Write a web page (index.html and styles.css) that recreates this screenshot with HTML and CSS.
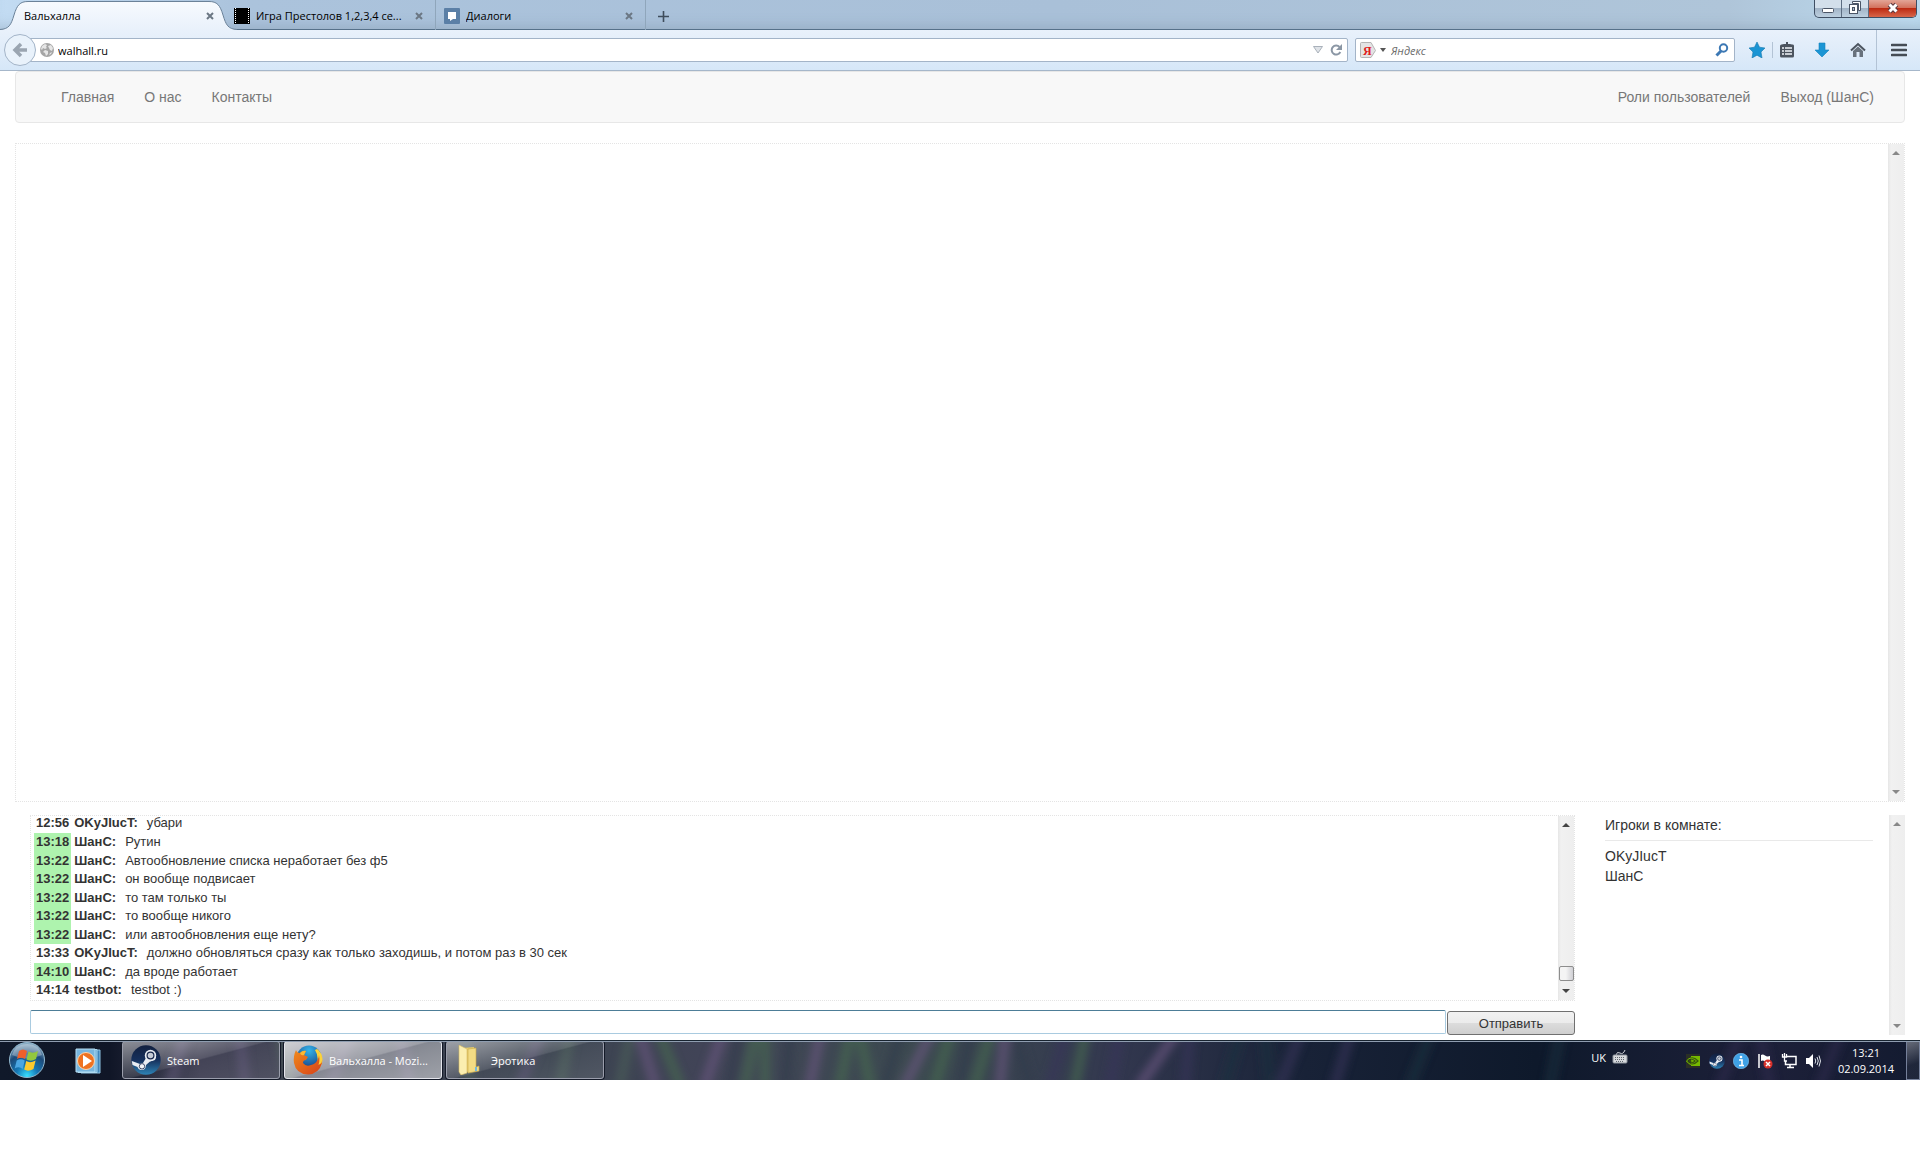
FILE: index.html
```html
<!DOCTYPE html>
<html lang="ru">
<head>
    <meta charset="UTF-8">
    <meta name="viewport" content="width=device-width, initial-scale=1.0">
    <title>Вальхалла</title>
    <link rel="stylesheet" href="styles.css">
</head>
<body>
    <!-- Вкладки -->
    <header class="tabstrip">
        <div class="tab tab-active">
            <svg class="tab-shape" viewBox="0 0 237 30" width="237" height="30">
                <defs>
                    <linearGradient id="tabFill" x1="0" y1="0" x2="0" y2="1">
                        <stop offset="0" stop-color="#f7fafe"/>
                        <stop offset="1" stop-color="#e9f1fb"/>
                    </linearGradient>
                </defs>
                <path d="M0 30V29.500C9 29 11 25 14 15C17 5 20 1.500 28 1.500H209C217 1.500 220 5 223 15C226 25 228 29 237 29.500V30Z" fill="url(#tabFill)"/>
                <path d="M0 29.500C9 29 11 25 14 15C17 5 20 1.500 28 1.500H209C217 1.500 220 5 223 15C226 25 228 29 237 29.500" fill="none" stroke="#6b8299"/>
            </svg>
            <span class="tab-title">Вальхалла</span>
            <button class="tab-close" aria-label="Закрыть"><svg viewBox="0 0 8 8" width="8" height="8"><path d="M1 1l6 6M7 1l-6 6"/></svg></button>
        </div>
        <div class="tab tab-film">
            <svg viewBox="0 0 16 16" width="16" height="16">
                <rect width="16" height="16" fill="#000"/>
                <path d="M1.500 0V16M14.500 0V16" stroke="#fff" stroke-dasharray="1 1"/>
            </svg>
            <span class="tab-title">Игра Престолов 1,2,3,4 се...</span>
            <button class="tab-close" aria-label="Закрыть"><svg viewBox="0 0 8 8" width="8" height="8"><path d="M1 1l6 6M7 1l-6 6"/></svg></button>
        </div>
        <div class="tab tab-vk">
            <svg viewBox="0 0 16 16" width="16" height="16">
                <rect width="16" height="16" rx="1" fill="#5b7fa6"/>
                <path d="M4 4H12V11H9L6 13V11H4Z" fill="#fff"/>
            </svg>
            <span class="tab-title">Диалоги</span>
            <button class="tab-close" aria-label="Закрыть"><svg viewBox="0 0 8 8" width="8" height="8"><path d="M1 1l6 6M7 1l-6 6"/></svg></button>
        </div>
        <button class="tab-new" aria-label="Новая вкладка"><svg viewBox="0 0 11 11" width="11" height="11"><path d="M5.500 0V11M0 5.500H11" stroke="#3f4d5c" stroke-width="1.600"/></svg></button>
        <div class="window-buttons">
            <button class="win-min" aria-label="Свернуть"><svg viewBox="0 0 14 12" width="14" height="12"><rect x="1.500" y="6.500" width="11" height="4" rx="1" fill="#fff" stroke="#4b5566"/></svg></button>
            <button class="win-max" aria-label="Развернуть"><svg viewBox="0 0 14 13" width="14" height="13"><path d="M4.500 .5H12.500V9.500H10.500V2.500H4.500Z" fill="#fff" stroke="#4b5566"/><rect x="1.500" y="3.500" width="8" height="9" fill="#fff" stroke="#4b5566"/><rect x="4.500" y="6.500" width="2" height="3" fill="#a9b9cc" stroke="#4b5566"/></svg></button>
            <button class="win-close" aria-label="Закрыть окно"><svg viewBox="0 0 14 12" width="14" height="12"><path d="M3.500 2.500L10.500 9.500M10.500 2.500L3.500 9.500" stroke="#5a3a40" stroke-width="5"/><path d="M3.500 2.500L10.500 9.500M10.500 2.500L3.500 9.500" stroke="#fff" stroke-width="3"/></svg></button>
        </div>
    </header>

    <!-- Панель навигации браузера -->
    <div class="toolbar">
        <div class="address">
            <button class="back" aria-label="Назад"><svg viewBox="0 0 16 16" width="16" height="16"><path d="M9 2L3 8L9 14M3.500 8H15" fill="none" stroke="#9aa5b1" stroke-width="3.500"/></svg></button>
            <svg class="globe" viewBox="0 0 14 14" width="14" height="14">
                <circle cx="7" cy="7" r="7" fill="#a5a5a5"/>
                <path d="M2 3L5 1L7 2L6 4L7 5L5 6L3 5L2 7L1 6ZM8 3L11 2L13 5L12 8L10 7L9 5ZM5 7L8 8L8 11L6 13L5 10L3 9ZM10 10L12 9L11 11L9 12Z" fill="#e6e6e6"/>
            </svg>
            <input class="url" type="text" value="walhall.ru" aria-label="Адрес">
            <svg class="url-drop" viewBox="0 0 10 8" width="10" height="8"><path d="M.5 .5H9.500L5 7Z" fill="#dfe3e8" stroke="#a9b1ba"/></svg>
            <button class="reload" aria-label="Обновить"><svg viewBox="0 0 12 12" width="12" height="12"><path d="M9.500 3A4.500 4.500 0 1 0 10.300 8" fill="none" stroke="#8b97a5" stroke-width="2"/><path d="M12 0V6H6Z" fill="#8b97a5"/></svg></button>
        </div>
        <div class="search">
            <svg viewBox="0 0 16 17" width="16" height="17">
                <path d="M1.500 .5H11L15.500 8.500L11 15.500H1.500Q.5 15.500 .5 14.500V1.500Q.5 .5 1.500 .5Z" fill="#e4e4e4" stroke="#b4b4b4"/>
                <text class="ya" x="3" y="13">Я</text>
            </svg>
            <svg class="search-drop" viewBox="0 0 6 4" width="6" height="4"><path d="M0 0H6L3 4Z" fill="#555"/></svg>
            <input class="search-input" type="text" placeholder="Яндекс" aria-label="Поиск">
            <button aria-label="Найти"><svg viewBox="0 0 14 14" width="14" height="14"><circle cx="8.500" cy="5" r="3.700" fill="none" stroke="#3c78b4" stroke-width="2"/><path d="M6 8L1.500 12.500" stroke="#3c78b4" stroke-width="3"/></svg></button>
        </div>
        <div class="tools">
            <button aria-label="В закладки"><svg viewBox="0 0 16 16" width="16" height="16"><path d="M8 0L10.500 5.200L16 6L12 10L13 16L8 13.200L3 16L4 10L0 6L5.500 5.200Z" fill="#1b95d4"/><path d="M8 0L10.500 5.200L16 6L12 10L13 16L8 13.200L3 16L4 10L0 6L5.500 5.200Z" fill="none" stroke="#1477ad" stroke-width=".6"/></svg></button>
            <button class="bookmarks" aria-label="Закладки"><svg viewBox="0 0 16 16" width="16" height="16"><path d="M5 2L7 2V0H9V2H11L13 2.500H14Q15 2.500 15 4V14Q15 15.500 13.500 15.500H2.500Q1 15.500 1 14V4Q1 2.500 2.500 2.500Z" fill="#4c545f"/><path d="M3 6H5M6 6H13M3 9H5M6 9H13M3 12H5M6 12H13" stroke="#f1f5fa" stroke-width="1.600"/></svg></button>
            <button aria-label="Загрузки"><svg viewBox="0 0 16 16" width="16" height="16"><path d="M5 1H11V8H15L8 15L1 8H5Z" fill="#1b95d4" stroke="#1684bd" stroke-width=".6"/></svg></button>
            <button aria-label="Домой"><svg viewBox="0 0 16 16" width="16" height="16"><path d="M1 8.500L8 2L15 8.500" fill="none" stroke="#4c545f" stroke-width="2"/><path d="M3 9L8 4.500L13 9V15H9.500V10H6.500V15H3Z" fill="#68717c"/></svg></button>
            <button class="menu" aria-label="Меню"><svg viewBox="0 0 16 14" width="16" height="14"><path d="M1 2H15M1 7H15M1 12H15" stroke="#454c55" stroke-width="2.600" stroke-linecap="round"/></svg></button>
        </div>
    </div>

    <!-- Страница -->
    <main class="page">
        <nav class="navbar">
            <ul>
                <li><a href="#">Главная</a></li>
                <li><a href="#">О нас</a></li>
                <li><a href="#">Контакты</a></li>
            </ul>
            <ul>
                <li><a href="#">Роли пользователей</a></li>
                <li><a href="#">Выход (ШанС)</a></li>
            </ul>
        </nav>

        <section class="game">
            <div class="scrollbar scrollbar-off"><i class="up"></i><i class="down"></i></div>
        </section>

        <div class="room">
            <section class="chat">
                <div class="chat-box">
                    <ul class="messages">
                        <li><b class="time">12:56</b><b>OKyJIucT:</b><span>убари</span></li>
                        <li><b class="time mine">13:18</b><b>ШанС:</b><span>Рутин</span></li>
                        <li><b class="time mine">13:22</b><b>ШанС:</b><span>Автообновление списка неработает без ф5</span></li>
                        <li><b class="time mine">13:22</b><b>ШанС:</b><span>он вообще подвисает</span></li>
                        <li><b class="time mine">13:22</b><b>ШанС:</b><span>то там только ты</span></li>
                        <li><b class="time mine">13:22</b><b>ШанС:</b><span>то вообще никого</span></li>
                        <li><b class="time mine">13:22</b><b>ШанС:</b><span>или автообновления еще нету?</span></li>
                        <li><b class="time">13:33</b><b>OKyJIucT:</b><span>должно обновляться сразу как только заходишь, и потом раз в 30 сек</span></li>
                        <li><b class="time mine">14:10</b><b>ШанС:</b><span>да вроде работает</span></li>
                        <li><b class="time">14:14</b><b>testbot:</b><span>testbot :)</span></li>
                    </ul>
                    <div class="scrollbar"><i class="up"></i><i class="thumb"></i><i class="down"></i></div>
                </div>
                <form class="send">
                    <input type="text" aria-label="Сообщение">
                    <button type="button">Отправить</button>
                </form>
            </section>
            <aside class="players">
                <div class="players-list">
                    <h2>Игроки в комнате:</h2>
                    <ul>
                        <li>OKyJIucT</li>
                        <li>ШанС</li>
                    </ul>
                </div>
                <div class="scrollbar scrollbar-off"><i class="up"></i><i class="down"></i></div>
            </aside>
        </div>
    </main>

    <!-- Панель задач -->
    <footer class="taskbar">
        <svg class="grass" viewBox="0 0 1920 40" preserveAspectRatio="none">
            <defs>
                <filter id="soft" x="-5%" y="-50%" width="110%" height="200%"><feGaussianBlur stdDeviation="4 3"/></filter>
            </defs>
            <g filter="url(#soft)" fill="none" stroke-width="11" opacity=".6">
                <path d="M170 45L185 -5M245 45L240 -5M330 45L350 -5M410 45L400 -5M520 45L540 -5" stroke="#57506f"/>
                <path d="M290 45L280 -5M470 45L465 -5M560 45L570 -5M620 45L630 -5" stroke="#4b5f58"/>
                <path d="M655 45L640 -5M705 45L722 -5M810 45L820 -5M905 45L930 -5M1000 45L1005 -5M1140 45L1175 -5" stroke="#6b5680"/>
                <path d="M680 45L660 -5M745 45L755 -5M765 45L765 -5M840 45L850 -5M870 45L860 -5M935 45L950 -5M975 45L990 -5M1075 45L1085 -5" stroke="#466a50"/>
                <path d="M730 45L740 -5M785 45L790 -5M885 45L900 -5M960 45L970 -5M1030 45L1015 -5" stroke="#303a4c"/>
                <path d="M1050 45L1065 -5M1110 45L1120 -5M1185 45L1190 -5M1280 45L1300 -5M1335 45L1350 -5" stroke="#39345a"/>
                <path d="M1225 45L1240 -5M1270 45L1265 -5M1410 45L1430 -5M1550 45L1560 -5" stroke="#1f3340"/>
                <path d="M1720 45L1740 -5M1770 45L1760 -5M1820 45L1840 -5" stroke="#2f2c4d"/>
            </g>
        </svg>
        <button class="start" aria-label="Пуск">
            <svg viewBox="0 0 38 38" width="38" height="38">
                <defs>
                    <radialGradient id="orb" cx=".5" cy=".95" r=".9">
                        <stop offset="0" stop-color="#37e0ff"/>
                        <stop offset=".35" stop-color="#1577b5"/>
                        <stop offset=".7" stop-color="#1d4a78"/>
                        <stop offset="1" stop-color="#86a9c2"/>
                    </radialGradient>
                </defs>
                <circle cx="19" cy="19" r="17.500" fill="url(#orb)" stroke="#93b9cf"/>
                <path d="M4 14Q7 3 19 3T34 14Q19 21 4 14Z" fill="#fff" opacity=".3"/>
                <path d="M11 10Q15 7 19 10L17 18Q13 15.500 9 18Z" fill="#f0602a"/>
                <path d="M20.500 10.500Q25 13 30 10L28 18Q23 21 18.500 18.500Z" fill="#93c83e"/>
                <path d="M8.700 19.500Q13 17 16.700 19.500L14.700 28Q11 25 6.700 27.500Z" fill="#4ba6e2"/>
                <path d="M18.200 20Q22 22.500 27.600 19.500L25.500 28Q20 31 16.200 28.500Z" fill="#fdca2e"/>
            </svg>
        </button>
        <button class="player" aria-label="Проигрыватель">
            <svg viewBox="0 0 26 26" width="26" height="26">
                <path d="M6 2H25V25H6Z" fill="#3f84b8" stroke="#8ec3e4"/>
                <path d="M3 1.500H22V24.500H3Z" fill="#5da4d2" stroke="#a7d6ef"/>
                <path d="M1 1H20V24H1Z" fill="#77b5dd" stroke="#b7def3"/>
                <circle cx="11" cy="13" r="8.500" fill="#ee7220" stroke="#fbd5ae"/>
                <path d="M8 7L17 13L8 19Z" fill="#fff"/>
            </svg>
        </button>
        <button class="task">
            <svg viewBox="0 0 30 30" width="30" height="30">
                <defs>
                    <linearGradient id="steam" x1="0" y1="0" x2="0" y2="1">
                        <stop offset="0" stop-color="#12203f"/>
                        <stop offset=".5" stop-color="#16305c"/>
                        <stop offset="1" stop-color="#2d83b5"/>
                    </linearGradient>
                </defs>
                <g id="steamLogo">
                    <circle cx="15" cy="15" r="14.700" fill="url(#steam)"/>
                    <path d="M.8 16L9 19Q11 18 12 18L15 13L15 9L25 12L24 15L19 16.500L15 20Q15 25 10.500 25Q7.500 25 6.500 22L1.500 20Z" fill="#e9edf2"/>
                    <circle cx="19.500" cy="10.500" r="5.700" fill="#e9edf2"/>
                    <circle cx="19.500" cy="10.500" r="3.400" fill="#c6ccd6" stroke="#17264a" stroke-width="1.200"/>
                    <circle cx="11" cy="21.300" r="2.700" fill="#f4f6f8" stroke="#17264a" stroke-width=".8"/>
                </g>
            </svg>
            <span>Steam</span>
        </button>
        <button class="task task-active">
            <svg viewBox="0 0 30 30" width="30" height="30">
                <defs>
                    <radialGradient id="foxGlobe" cx=".5" cy=".2" r=".8">
                        <stop offset="0" stop-color="#35b4ea"/>
                        <stop offset="1" stop-color="#14367c"/>
                    </radialGradient>
                    <linearGradient id="fox" x1="0" y1="0" x2="1" y2="1">
                        <stop offset="0" stop-color="#f08a1c"/>
                        <stop offset="1" stop-color="#d6401a"/>
                    </linearGradient>
                </defs>
                <circle cx="16" cy="13" r="12.500" fill="url(#foxGlobe)"/>
                <path d="M24 4Q31 10 29 18Q27 24 22 26L24 19Q26 11 22 5Z" fill="#fbd33a"/>
                <path d="M3 5Q4 8 7 8Q10 5 13 6L11 10L15 12L13 15Q10 15 10 18Q13 22 18 20Q23 19 25 14Q27 9 25 6Q30 12 29 18Q26 29 15 29.500Q3 29 1 18Q0 11 3 5Z" fill="url(#fox)"/>
                <path d="M24 4Q31 10 28.500 18L25.500 20Q28 12 24 4Z" fill="#fbd33a"/>
                <path d="M7 8Q10 5 13 6L11 10Q8 11 7 8Z" fill="#fbb934"/>
            </svg>
            <span>Вальхалла - Mozi...</span>
        </button>
        <button class="task">
            <svg viewBox="0 0 30 30" width="30" height="30">
                <path d="M8 3L19 2V24L12 27Z" fill="#e6cc6c"/>
                <path d="M13 4L21 3V22L24 21V26L13 28Z" fill="#f3dc84" stroke="#c9a94a" stroke-width=".6"/>
                <path d="M4 0L12 4V28L6 30L4 27Z" fill="#fbeeb0" stroke="#d6bb60" stroke-width=".6"/>
                <rect x="20" y="22" width="2" height="4" fill="#74b8dc"/>
            </svg>
            <span>Эротика</span>
        </button>

        <div class="tray">
            <div class="lang">
                <span>UK</span>
                <svg viewBox="0 0 16 14" width="16" height="14">
                    <path d="M4 5Q5 1 8 3T13 0" fill="none" stroke="#ccd0d6"/>
                    <rect x="1" y="5" width="14" height="8" rx="1" fill="#d6d9dd" stroke="#8f959d"/>
                    <path d="M3 7.500H13M3 9.500H13M4 11.500H12" stroke="#60666f" stroke-dasharray="1 1"/>
                </svg>
            </div>
            <div class="tray-icons">
                <svg viewBox="0 0 16 16" width="16" height="16"><rect x="1" y="1" width="14" height="14" fill="#2a2f26"/><path d="M6 3H15V13H6Z" fill="#76b900"/><path d="M1.500 8Q7 1.500 13 8Q7 14 1.500 8ZM4.500 8Q7.500 5 10 8Q7.500 11 4.500 8Z" fill="none" stroke="#38570d" stroke-width="1.200"/><path d="M1.500 8Q4 5 6 5M1.500 8Q4 11.500 6 11.500" fill="none" stroke="#76b900"/></svg>
                <svg viewBox="0 0 30 30" width="16" height="16"><use href="#steamLogo"/></svg>
                <svg viewBox="0 0 16 16" width="16" height="16"><circle cx="8" cy="8" r="7.700" fill="#3fa1e6" stroke="#83c8f5" stroke-width=".6"/><path d="M6 7H9V12M6 12.500H11" fill="none" stroke="#fff" stroke-width="1.600"/><circle cx="8" cy="4" r="1.300" fill="#fff"/></svg>
                <svg viewBox="0 0 16 16" width="16" height="16"><path d="M2 1V15" stroke="#fff" stroke-width="1.500"/><path d="M4 2Q6 1 8 2.500T13 3V9Q10 10 8 8.500T4 8Z" fill="#fff"/><circle cx="11" cy="11" r="4.500" fill="#d8302a"/><path d="M9 9L13 13M13 9L9 13" stroke="#fff" stroke-width="1.500"/></svg>
                <svg viewBox="0 0 16 16" width="16" height="16"><path d="M6 3.500H15V11.500H4.500V8M9 12V14M6 14.500H13" fill="none" stroke="#fff" stroke-width="1.500"/><path d="M1.500 1V4H5.500V1M3.500 0V8H6" fill="none" stroke="#fff" stroke-width="1.300"/></svg>
                <svg viewBox="0 0 16 16" width="16" height="16"><path d="M1 5H4L8 1V15L4 11H1Z" fill="#fff"/><path d="M10 5.500Q11.500 8 10 10.500M12 4Q14.500 8 12 12M14 2.500Q17 8 14 13.500" fill="none" stroke="#dfe3ea"/></svg>
            </div>
            <div class="clock"><span>13:21</span><span>02.09.2014</span></div>
            <button class="show-desktop" aria-label="Свернуть все окна"></button>
        </div>
    </footer>
</body>
</html>
```

FILE: styles.css
```css
* {
    margin: 0;
    padding: 0;
    box-sizing: border-box;
}

body {
    min-height: 100vh;
    padding-bottom: 84px;
    display: flex;
    flex-direction: column;
    background: #fff;
    color: #333;
    font-family: "Liberation Sans", Arial, sans-serif;
    font-size: 14px;
    line-height: 20px;
}

ul {
    list-style: none;
}

button {
    border: none;
    background: none;
    color: inherit;
    font-family: inherit;
}

svg {
    display: block;
    flex: none;
}

.tabstrip,
.toolbar,
.taskbar {
    font-family: "Open Sans", "Noto Sans", sans-serif;
    font-size: 11px;
    line-height: 16px;
}

/* Вкладки */
.tabstrip {
    height: 30px;
    display: flex;
    color: #000;
    background: linear-gradient(to right, #c3dcf3 0, #abc3dc 240px, #a9c0d8 55%, #afc5d9 90%, #bddbef 100%);
    box-shadow: inset 0 -1px #56718a, inset 0 -12px 12px -8px rgba(120, 140, 160, 0.35);
}

.tab {
    display: flex;
    align-items: center;
    padding: 2px 12px 0 8px;
    position: relative;
}

.tab-title {
    flex: 1;
    position: relative;
    white-space: nowrap;
    overflow: hidden;
}

.tab-active {
    width: 226px;
    padding-left: 24px;
}

.tab-shape {
    position: absolute;
    left: 0;
    top: 0;
}

.tab-film {
    width: 210px;
    gap: 6px;
    border-right: 1px solid #8fa6bb;
}

.tab-vk {
    width: 210px;
    gap: 6px;
    border-right: 1px solid #8fa6bb;
}

.tab-close {
    position: relative;
}

.tab-close path {
    stroke: #6b7784;
    stroke-width: 2;
}

.tab-new {
    padding: 2px 12px 0;
}

.window-buttons {
    margin: 0 3px 0 auto;
    height: 18px;
    display: flex;
    border: 1px solid #3f4e63;
    border-top: none;
    border-radius: 0 0 5px 5px;
    overflow: hidden;
    background: linear-gradient(#d3dfeb 0 45%, #a2b4c7 50%, #bdd0e0 100%);
}

.window-buttons button {
    width: 27px;
    padding-bottom: 2px;
    display: flex;
    justify-content: center;
    align-items: center;
    border-right: 1px solid #5d6d82;
}

.window-buttons .win-close {
    width: 47px;
    border-right: none;
    background: linear-gradient(#e3a596 0, #d3725d 45%, #bd2b12 50%, #d8664a 100%);
}

/* Адресная строка */
.toolbar {
    height: 41px;
    padding: 0 13px 0 4px;
    display: flex;
    align-items: center;
    gap: 7px;
    background: linear-gradient(#e9f1fb, #d6e7f8);
    border-bottom: 1px solid #a6b7ca;
}

.toolbar button {
    display: flex;
}

.address {
    flex: 1;
    height: 24px;
    margin-left: 15px;
    padding-right: 5px;
    display: flex;
    align-items: center;
    background: #fff;
    border: 1px solid #a3b4c8;
    border-radius: 2px;
}

.toolbar .back {
    flex: none;
    width: 32px;
    height: 32px;
    margin-left: -16px;
    align-items: center;
    justify-content: center;
    border: 1px solid #a3b4c8;
    border-radius: 50%;
    background: #e9f2fb;
}

.globe {
    margin-left: 4px;
}

.url,
.search-input {
    flex: 1;
    min-width: 0;
    padding-top: 1px;
    border: none;
    outline: none;
    background: none;
    color: #000;
    font: inherit;
}

.url {
    padding-left: 4px;
}

.url-drop {
    margin-right: 7px;
}

.search {
    width: 380px;
    height: 24px;
    padding: 0 5px 0 4px;
    display: flex;
    align-items: center;
    background: #fff;
    border: 1px solid #a3b4c8;
    border-radius: 2px;
}

.ya {
    fill: #e01b1b;
    font: bold 12px "Liberation Serif", serif;
}

.search-drop {
    margin: 0 5px 0 4px;
}

.search-input::placeholder {
    color: #6d6d6d;
    font-style: italic;
    opacity: 1;
}

.tools {
    align-self: stretch;
    display: flex;
    align-items: center;
    padding-left: 7px;
}

.tools .bookmarks {
    margin: 0 19px 0 7px;
    padding-left: 6px;
    border-left: 1px solid #b3c3d5;
}

.tools button:nth-child(4) {
    margin-left: 20px;
}

.tools .menu {
    align-self: stretch;
    align-items: center;
    margin-left: 10px;
    padding-left: 14px;
    border-left: 1px solid #b3c3d5;
}

/* Страница */
.page {
    flex: 1;
    padding: 0 15px 5px;
    display: flex;
    flex-direction: column;
}

.navbar {
    height: 52px;
    margin-bottom: 20px;
    padding: 0 15px 0 30px;
    display: flex;
    justify-content: space-between;
    align-items: center;
    background: #f8f8f8;
    border: 1px solid #e7e7e7;
    border-radius: 4px;
}

.navbar ul {
    display: flex;
}

.navbar a {
    display: block;
    padding: 15px;
    color: #777;
    text-decoration: none;
}

.game {
    flex: 1;
    margin-bottom: 13px;
    display: flex;
    justify-content: flex-end;
    border: 1px dotted #e4e4e4;
}

.room {
    display: grid;
    grid-template-columns: 5fr 1fr;
}

.chat {
    padding: 0 15px;
}

.chat-box {
    height: 186px;
    margin-bottom: 9px;
    display: flex;
    align-items: stretch;
    border: 1px dotted #e4e4e4;
}

.messages {
    flex: 1;
    padding-left: 3px;
    display: flex;
    flex-direction: column;
    justify-content: flex-end;
    font-size: 13px;
    line-height: 1.428;
}

.messages li {
    display: flex;
}

.messages .time {
    margin-right: 3px;
    padding: 0 2px;
}

.messages .mine {
    background: #aef3ae;
}

.messages span {
    margin-left: 9px;
}

.send {
    height: 25px;
    display: flex;
    align-items: flex-start;
    gap: 1px;
}

.send input {
    flex: 1;
    height: 24px;
    padding: 0 4px;
    border: 1px solid #a9cbe0;
    border-top-color: #4d7d97;
    border-radius: 2px;
    outline: none;
}

.send button {
    width: 128px;
    height: 24px;
    margin-top: 1px;
    border: 1px solid #707070;
    border-radius: 3px;
    background: linear-gradient(#f2f2f2 0, #ebebeb 50%, #dcdcdc 51%, #cfcfcf 100%);
    color: #333;
    font-size: 13px;
}

.players {
    display: flex;
}

.players-list {
    flex: 1;
    padding: 0 16px 0 15px;
}

.players h2 {
    padding-bottom: 5px;
    margin-bottom: 5px;
    border-bottom: 1px solid #e9e9e9;
    font-size: 14px;
    font-weight: normal;
}

/* Полосы прокрутки */
.scrollbar {
    width: 16px;
    padding: 7px 0;
    display: flex;
    flex-direction: column;
    align-items: center;
    background: linear-gradient(to right, #e6e6e6, #f1f1f1 3px, #eeeeee);
}

.scrollbar i {
    border: 4px solid transparent;
}

.scrollbar .up {
    border-top: none;
    border-bottom: 4px solid #444;
    margin-bottom: auto;
}

.scrollbar .down {
    border-bottom: none;
    border-top: 4px solid #444;
}

.scrollbar .thumb {
    width: 15px;
    height: 15px;
    margin-bottom: 8px;
    border: 1px solid #8d8d8d;
    border-radius: 2px;
    background: linear-gradient(to right, #f4f4f4 45%, #cfcfd4);
}

.scrollbar-off .up {
    border-bottom-color: #888;
}

.scrollbar-off .down {
    border-top-color: #888;
}

/* Панель задач */
.taskbar {
    position: relative;
    height: 40px;
    display: flex;
    align-items: center;
    color: #fff;
    background: linear-gradient(to right, #10192a 0, #101627 110px, #3c3c50 200px, #3b4450 560px, #414457 700px, #3c4a50 48%, #33384f 58%, #182237 68%, #0e192b 80%, #1d2039 92%, #131b30 100%);
}

.taskbar::after {
    content: "";
    position: absolute;
    inset: 0 0 auto;
    height: 2px;
    background: linear-gradient(#182430 50%, #8f9db0 50%);
}

.grass {
    position: absolute;
    inset: 0;
    width: 100%;
    height: 100%;
}

.start,
.player,
.task,
.tray {
    position: relative;
}

.start {
    margin-left: 8px;
}

.player {
    margin: 2px 21px 0 29px;
}

.task {
    width: 158px;
    height: 38px;
    margin-right: 4px;
    padding: 0 8px;
    display: flex;
    align-items: center;
    gap: 6px;
    border: 1px solid #9b9eac;
    border-radius: 3px;
    background: linear-gradient(165deg, rgba(255, 255, 255, 0.5), rgba(255, 255, 255, 0.14) 48%, rgba(255, 255, 255, 0.04) 50%, rgba(255, 255, 255, 0.1));
    box-shadow: 0 0 0 1px #141a28;
    font-size: 11px;
    white-space: nowrap;
}

.task-active {
    border-color: #e4e5ec;
    background: linear-gradient(165deg, rgba(255, 255, 255, 0.75), rgba(255, 255, 255, 0.5) 48%, rgba(255, 255, 255, 0.38) 50%, rgba(255, 255, 255, 0.5));
}

.tray {
    align-self: stretch;
    margin-left: auto;
    display: flex;
    align-items: center;
}

.lang {
    display: flex;
    gap: 6px;
    margin: 0 57px 4px 0;
}

.tray-icons {
    display: flex;
    gap: 8px;
    padding-top: 2px;
}

.clock {
    display: flex;
    flex-direction: column;
    align-items: center;
    margin: 1px 12px 0 17px;
}

.show-desktop {
    align-self: stretch;
    width: 14px;
    margin-top: 1px;
    border: 1px solid #75809a;
    background: linear-gradient(160deg, rgba(255, 255, 255, 0.35), rgba(255, 255, 255, 0.05) 60%);
}
```
